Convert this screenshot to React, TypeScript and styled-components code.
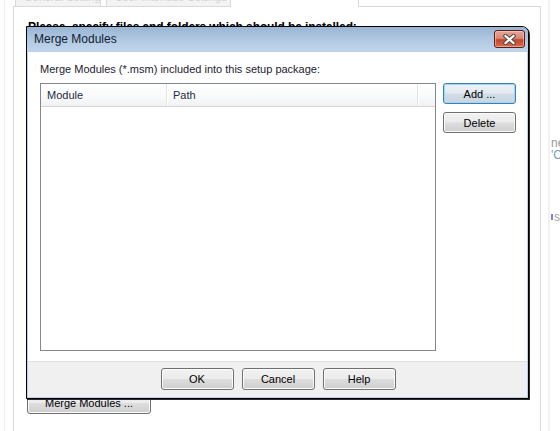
import React from "react";
import styled, { createGlobalStyle, css } from "styled-components";

const GlobalStyle = createGlobalStyle`
  html, body { margin: 0; padding: 0; background: #fff; }
  body {
    font-family: "Liberation Sans", Arial, sans-serif;
    font-size: 11px;
    color: #1b1b2f;
  }
  #root { width: 560px; height: 431px; overflow: hidden; }
  * { box-sizing: border-box; }
`;

const Page = styled.div`
  position: relative;
  display: flex;
  width: 560px;
  height: 431px;
  overflow: hidden;
  background: #fff;
`;

const EdgeLine = styled.div`
  flex: none;
  width: 5px;
  border-right: 1px solid #efefef;
`;

const MainArea = styled.div`
  flex: none;
  margin-left: 8px;
  width: 528px;
  display: flex;
  flex-direction: column;
`;

const TabRow = styled.div`
  flex: none;
  display: flex;
  height: 7px;
`;

const TabGap = styled.div<{ $w?: number }>`
  flex: ${(p) => (p.$w ? "none" : "1")};
  width: ${(p) => (p.$w ? `${p.$w}px` : "auto")};
  border-bottom: 1px solid #d9d9d9;
`;

const Tab = styled.div<{ $w: number; $selected?: boolean }>`
  flex: none;
  width: ${(p) => p.$w}px;
  height: 7px;
  overflow: hidden;
  border: 1px solid #d9d9d9;
  border-top: none;
  ${(p) =>
    p.$selected
      ? css`
          border-left: none;
          border-bottom: none;
          background: #fff;
        `
      : css`
          background: #f3f3f3;
        `}
`;

const TabText = styled.div`
  margin-top: -9px;
  padding-left: 8px;
  line-height: 12px;
  font-size: 11px;
  color: #d2d2d2;
  white-space: nowrap;
`;

const Panel = styled.div`
  flex: 1;
  display: flex;
  flex-direction: column;
  border-left: 1px solid #dcdcdc;
  border-right: 1px solid #dcdcdc;
  padding: 13px 0 17px 13px;
`;

const Heading = styled.div`
  margin-left: 1px;
  font-size: 12px;
  line-height: 14px;
  font-weight: bold;
  color: #000;
  white-space: nowrap;
  letter-spacing: -0.1px;
`;

const SidePanel = styled.div`
  flex: 1;
  margin-left: 7px;
  border-left: 2px solid #f1f1f1;
  padding: 137px 0 0 1px;
  overflow: hidden;
  font-size: 12px;
  line-height: 12px;
  white-space: nowrap;
`;

const SideText = styled.div<{ $color: string; $mt?: number }>`
  color: ${(p) => p.$color};
  margin-top: ${(p) => p.$mt ?? 0}px;
  display: flex;
  align-items: center;
  gap: 1px;
`;

const SideMark = styled.span`
  display: inline-block;
  width: 3px;
  height: 6px;
  background: #8a7cd0;
`;

const buttonFace = css`
  background: linear-gradient(
    180deg,
    #f2f2f2 0%,
    #ebebeb 48%,
    #dddddd 52%,
    #cfcfcf 100%
  );
`;

const Button = styled.button<{ $w: number; $h?: number; $focused?: boolean }>`
  flex: none;
  width: ${(p) => p.$w}px;
  height: ${(p) => p.$h ?? 22}px;
  margin: 0;
  padding: 0;
  font-family: "Liberation Sans", Arial, sans-serif;
  font-size: 11px;
  color: #000;
  border-radius: 3px;
  cursor: default;
  ${(p) =>
    p.$focused
      ? css`
          border: 1px solid #3c7fb1;
          box-shadow: inset 0 0 0 1px #9fd8f4;
          background: linear-gradient(
            180deg,
            #edf2f6 0%,
            #e3eaf0 48%,
            #d3dde6 52%,
            #c8d5e0 100%
          );
        `
      : css`
          border: 1px solid #707070;
          box-shadow: inset 0 0 0 1px #fbfbfb;
          ${buttonFace}
        `}
`;

const BottomButton = styled(Button)`
  margin-top: auto;
  align-self: flex-start;
`;

/* ---------- Dialog window ---------- */

const Window = styled.div`
  position: absolute;
  left: 26px;
  top: 26px;
  width: 503px;
  height: 373px;
  border: 1px solid #000;
  border-radius: 0 7px 0 0;
  box-shadow: 1px 1px 0 #2a2a2a;
  background: #b9d1ea;
  display: flex;
  flex-direction: column;
  padding: 0 1px 1px 1px;
`;

const TitleBar = styled.div`
  flex: none;
  height: 24px;
  margin: 0 -1px;
  padding: 0 3px 0 7px;
  display: flex;
  align-items: center;
  justify-content: space-between;
  border-radius: 0 6px 0 0;
  background: linear-gradient(180deg, #99b5d4 0%, #b3cbe5 60%, #c1d5eb 100%);
`;

const TitleText = styled.div`
  font-size: 12px;
  color: #12202f;
  line-height: 14px;
`;

const CloseButton = styled.div`
  width: 31px;
  height: 18px;
  border: 1px solid #5a1f17;
  border-radius: 3px;
  display: flex;
  align-items: center;
  justify-content: center;
  box-shadow: inset 0 0 0 1px rgba(255, 220, 210, 0.5);
  background: linear-gradient(
    180deg,
    #e7a596 0%,
    #d98877 45%,
    #c7442c 55%,
    #d66a50 100%
  );
`;

const Client = styled.div`
  flex: 1;
  display: flex;
  flex-direction: column;
  background: #fff;
  margin-top: 1px;
`;

const ClientBody = styled.div`
  flex: 1;
  display: flex;
  flex-direction: column;
  padding: 10px 11px 10px 12px;
`;

const Label = styled.div`
  line-height: 14px;
  font-size: 11px;
  color: #1b1b2f;
  margin-bottom: 7px;
  white-space: nowrap;
`;

const ListRow = styled.div`
  flex: 1;
  display: flex;
  gap: 7px;
`;

const ListView = styled.div`
  flex: none;
  width: 396px;
  border: 1px solid #828790;
  background: #fff;
  display: flex;
  flex-direction: column;
`;

const ListHeader = styled.div`
  flex: none;
  display: flex;
  height: 23px;
  border-bottom: 1px solid #d5d5d5;
  background: linear-gradient(180deg, #ffffff 0%, #f8f9fa 60%, #f1f2f4 100%);
`;

const HeaderCell = styled.div<{ $w?: number }>`
  flex: ${(p) => (p.$w ? "none" : "1")};
  width: ${(p) => (p.$w ? `${p.$w}px` : "auto")};
  padding-left: 6px;
  line-height: 22px;
  font-size: 11px;
  color: #1e2a44;
  border-right: ${(p) => (p.$w ? "1px solid #e3e4e6" : "none")};
  box-shadow: ${(p) => (p.$w ? "1px 0 0 #ffffff" : "none")};
`;

const SideButtons = styled.div`
  flex: none;
  display: flex;
  flex-direction: column;
  gap: 8px;
`;

const Footer = styled.div`
  flex: none;
  height: 36px;
  border-top: 1px solid #dfdfdf;
  background: #f0f0f0;
  display: flex;
  justify-content: center;
  align-items: flex-start;
  gap: 8px;
  padding-top: 6px;
  padding-left: 1px;
`;

const CloseGlyph = () => (
  <svg width="13" height="11" viewBox="0 0 13 11">
    <path
      d="M2.5 2 L10.5 9 M10.5 2 L2.5 9"
      stroke="#4a4a4a"
      strokeWidth="4.2"
      strokeLinecap="square"
      fill="none"
    />
    <path
      d="M2.5 2 L10.5 9 M10.5 2 L2.5 9"
      stroke="#ffffff"
      strokeWidth="2.2"
      strokeLinecap="square"
      fill="none"
    />
  </svg>
);

export default function App() {
  return (
    <>
      <GlobalStyle />
      <Page>
        <EdgeLine />
        <MainArea>
          <TabRow>
            <TabGap $w={2} />
            <Tab $w={86}>
              <TabText>General Settings</TabText>
            </Tab>
            <TabGap $w={5} />
            <Tab $w={125}>
              <TabText>User Interface Settings</TabText>
            </Tab>
            <Tab $w={128} $selected />
            <TabGap />
          </TabRow>
          <Panel>
            <Heading>
              Please, specify files and folders which should be installed:
            </Heading>
            <BottomButton $w={124} $h={22}>
              Merge Modules ...
            </BottomButton>
          </Panel>
        </MainArea>
        <SidePanel>
          <SideText $color="#9a9a9a">ne</SideText>
          <SideText $color="#7b98c8">'C</SideText>
          <SideText $color="#a0a0a0" $mt={50}>
            <SideMark />s
          </SideText>
        </SidePanel>

        <Window>
          <TitleBar>
            <TitleText>Merge Modules</TitleText>
            <CloseButton>
              <CloseGlyph />
            </CloseButton>
          </TitleBar>
          <Client>
            <ClientBody>
              <Label>Merge Modules (*.msm) included into this setup package:</Label>
              <ListRow>
                <ListView>
                  <ListHeader>
                    <HeaderCell $w={126}>Module</HeaderCell>
                    <HeaderCell $w={251}>Path</HeaderCell>
                    <HeaderCell />
                  </ListHeader>
                </ListView>
                <SideButtons>
                  <Button $w={73} $h={21} $focused>
                    Add ...
                  </Button>
                  <Button $w={73} $h={21}>
                    Delete
                  </Button>
                </SideButtons>
              </ListRow>
            </ClientBody>
            <Footer>
              <Button $w={73}>OK</Button>
              <Button $w={73}>Cancel</Button>
              <Button $w={73}>Help</Button>
            </Footer>
          </Client>
        </Window>
      </Page>
    </>
  );
}
